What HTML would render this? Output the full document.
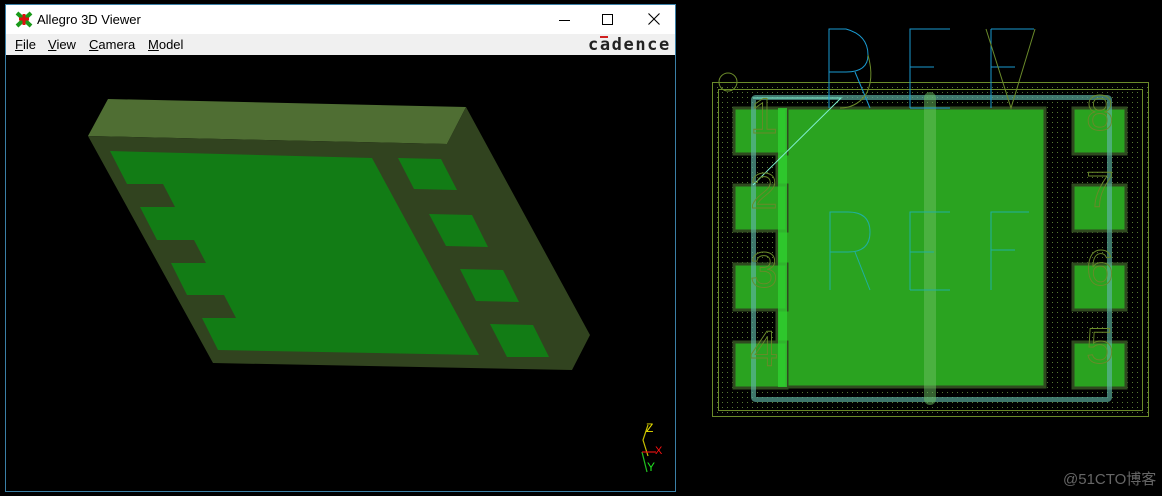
<!DOCTYPE html>
<html><head><meta charset="utf-8"><style>
body{margin:0;width:1162px;height:496px;background:#000;overflow:hidden;position:relative;font-family:"Liberation Sans","Noto Sans CJK SC",sans-serif}
#win{position:absolute;left:5px;top:4px;width:671px;height:488px;border:1px solid #3a7fa6;background:#000;box-sizing:border-box}
#title{position:absolute;left:0;top:0;width:669px;height:29px;background:#fff}
#title span{position:absolute;left:31px;top:7px;font-size:13px;color:#000}
#menu{position:absolute;left:0;top:29px;width:669px;height:21px;background:#f0f0f0;font-size:13px}
#menu span{position:absolute;top:3px;color:#000}
</style></head><body>
<div id="win">
 <div id="title">
  <svg style="position:absolute;left:9px;top:6px" width="18" height="17"><path d="M2 2 L16 15 M16 2 L2 15" stroke="#1a9a1a" stroke-width="4"/><path d="M4 8 L14 8 M9 3 L9 14" stroke="#e01010" stroke-width="3"/></svg>
  <span>Allegro 3D Viewer</span>
  <div style="position:absolute;left:553px;top:15px;width:11px;height:1px;background:#000"></div>
  <div style="position:absolute;left:596px;top:9px;width:9px;height:9px;border:1px solid #000"></div>
  <svg style="position:absolute;left:642px;top:8px" width="12" height="12"><path d="M0.5 0.5 L11.5 11.5 M11.5 0.5 L0.5 11.5" stroke="#000" stroke-width="1.1"/></svg>
 </div>
 <div id="menu">
  <span style="left:9px"><u>F</u>ile</span><span style="left:42px"><u>V</u>iew</span><span style="left:83px"><u>C</u>amera</span><span style="left:142px"><u>M</u>odel</span>
  <span style="left:582px;top:1px;font-size:17px;letter-spacing:1.6px;color:#222;font-family:'DejaVu Sans Mono',monospace;font-weight:bold">cadence</span>
  <div style="position:absolute;left:594px;top:2px;width:8px;height:2px;background:#d02020"></div>
 </div>
</div>
<svg style="position:absolute;left:0;top:0" width="680" height="496">
 <polygon points="88,136 108,99 466,107 447,144" fill="#4f6e33"/>
 <polygon points="88,136 447,144 466,107 590,335 572,370 213,363" fill="#31431f"/>
 <polygon points="110,151 372,158 479,355 218,350 202,318 236,318 224,295 187,295 171,263 206,263 194,240 157,240 140,207 175,207 163,184 127,184" fill="#127c15"/>
 <polygon points="398,158 441,159 457,190 414,189" fill="#127c15"/>
 <polygon points="429,214 472,215 488,247 446,246" fill="#127c15"/>
 <polygon points="460,269 503,270 519,302 476,301" fill="#127c15"/>
 <polygon points="490,324 533,325 549,357 507,357" fill="#127c15"/>
 <path d="M648 425 L643 440 L648 456" stroke="#c8c000" stroke-width="1.2" fill="none"/>
 <path d="M642 452 L647 472" stroke="#20c020" stroke-width="1.2" fill="none"/>
 <path d="M642 452 L656 452" stroke="#e01010" stroke-width="1.2"/>
 <text x="646" y="432" fill="#e8e000" font-size="12">Z</text>
 <text x="655" y="454" fill="#ff1010" font-size="11">X</text>
 <text x="647" y="471" fill="#20e020" font-size="12">Y</text>
</svg>
<svg style="position:absolute;left:700px;top:0" width="462" height="496">
 <defs><pattern id="d" width="5" height="5" patternUnits="userSpaceOnUse"><rect x="2" y="2" width="1" height="1" fill="#557733"/></pattern></defs>
 <rect x="12.5" y="82.5" width="436" height="334" fill="url(#d)" stroke="#6a8a2a"/>
 <rect x="18.5" y="89.5" width="424" height="321" fill="none" stroke="#6a8a2a"/>
 <circle cx="28" cy="82" r="9" fill="none" stroke="#6a8a2a"/>
 <g fill="#2aa320" stroke="#2f4a1f" stroke-width="3">
  <rect x="77" y="108" width="268" height="279"/>
  <rect x="34" y="108" width="53" height="46"/><rect x="34" y="185" width="53" height="46"/><rect x="34" y="264" width="53" height="46"/><rect x="34" y="342" width="53" height="46"/>
  <rect x="373" y="108" width="53" height="46"/><rect x="373" y="185" width="53" height="46"/><rect x="373" y="264" width="53" height="46"/><rect x="373" y="342" width="53" height="46"/>
 </g>
 <rect x="78" y="108" width="9" height="279" fill="#30d030" opacity=".8"/>
 <rect x="53.5" y="97.5" width="356" height="302" fill="none" stroke="#5fb5a5" stroke-width="5" opacity=".65" rx="2"/>
 <rect x="224" y="92" width="12" height="313" rx="6" fill="#6ac060" opacity=".5"/>
 <path d="M53 98 L141 98 L53 185" fill="none" stroke="#7ff0d0" stroke-width="1"/>
 <g fill="none" stroke="#1a9ad0" stroke-width="1">
  <path d="M129 108 V29 H146 Q168 35 168 55 Q168 72 146 72 H129 M155 72 L170 108"/>
  <path d="M250 29 H210 V108 M210 67 H234 M210 108 H250"/>
  <path d="M291 29 V108 M291 67 H315 M291 29 H334"/>
 </g>
 <path d="M286 29 L311 108 L335 29" fill="none" stroke="#6a8a2a"/>
 <path d="M168 55 Q175 80 165 96 Q155 108 140 108" fill="none" stroke="#6a8a2a"/>
 <g fill="none" stroke="#20b0a0" stroke-width="1">
  <path d="M130 290 V212 H148 Q170 212 170 232 Q170 252 148 252 H130 M155 252 L170 290"/>
  <path d="M250 212 H210 V290 M210 252 H234 M210 290 H250"/>
  <path d="M291 290 V212 H329 M291 250 H315"/>
 </g>
 <g fill="none" stroke="#6a8a2a" stroke-width="0.9" font-size="50" font-family="'Liberation Sans',sans-serif">
  <text x="50" y="133" transform="scale(1,1)">1</text><text x="50" y="208">2</text><text x="50" y="287">3</text><text x="50" y="366">4</text>
  <text x="386" y="130">8</text><text x="386" y="207">7</text><text x="386" y="285">6</text><text x="386" y="363">5</text>
 </g>
 <text x="363" y="484" fill="#666" font-size="15">@51CTO博客</text>
</svg>
</body></html>
